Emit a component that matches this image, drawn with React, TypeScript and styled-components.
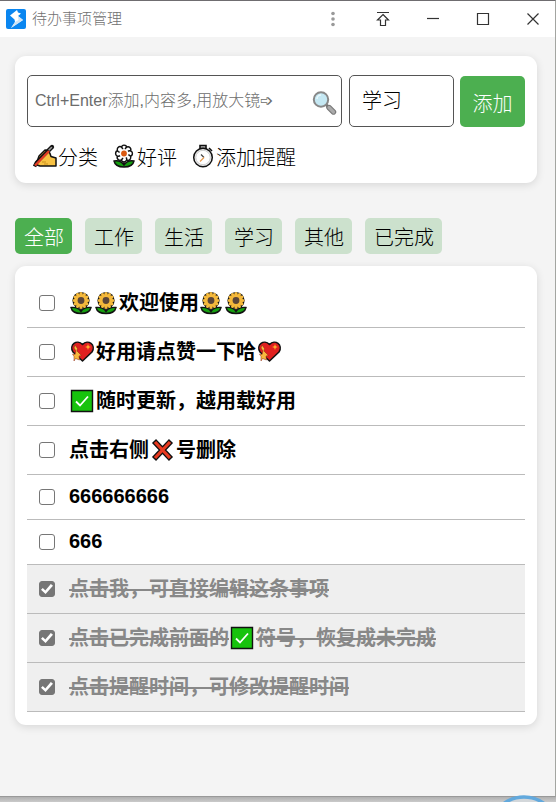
import React, { useState } from "react";
import styled, { createGlobalStyle } from "styled-components";

const GlobalStyle = createGlobalStyle`
  *, *::before, *::after { box-sizing: border-box; }
  body {
    margin: 0;
    background: #c8c8c8;
    color: #000;
    font-family: "Liberation Sans", "Noto Sans CJK SC", sans-serif;
    font-size: 20px;
    font-weight: 300;
  }
  button, input, select { font: inherit; color: inherit; margin: 0; }
`;

const Desktop = styled.div`
  display: flex;
  flex-direction: column;
  min-height: 100vh;
`;

const Window = styled.div`
  flex: 1;
  display: flex;
  flex-direction: column;
  background: #f4f4f4;
  border-top: 1px solid #6f6d70;
  border-right: 1px solid #a3a5a1;
  border-bottom: 1px solid #999;
`;

const TitleBar = styled.header`
  display: flex;
  align-items: center;
  height: 36px;
  padding: 0 7px 0 6px;
  background: #fff;
`;

const Title = styled.h1`
  flex: 1;
  margin: 0 0 0 6px;
  color: #707070;
  font-size: 15px;
  font-weight: 300;
  line-height: 20px;
`;

const WindowButtons = styled.div`
  display: flex;
  gap: 20px;
`;

const WindowButton = styled.button`
  display: flex;
  align-items: center;
  justify-content: center;
  width: 30px;
  height: 30px;
  padding: 0;
  border: 0;
  background: none;
`;

const Content = styled.main`
  padding: 19px 18px 71px 15px;
`;

const Card = styled.section`
  background: #fff;
  border-radius: 11px;
  box-shadow: 0 2px 8px rgba(0, 0, 0, 0.12);
`;

const Composer = styled(Card)`
  padding: 19px 12px 12px;
`;

const Form = styled.form`
  display: flex;
  align-items: flex-end;
`;

const Field = styled.div`
  flex: 1;
  display: flex;
  align-items: center;
  height: 52px;
  min-width: 0;
  padding: 0 4px 0 7px;
  border: 1px solid #555;
  border-radius: 5px;
`;

const TextInput = styled.input`
  flex: 1;
  min-width: 0;
  height: 48px;
  padding: 0;
  border: 0;
  outline: 0;
  background: none;
  font-size: 16px;
  &::placeholder { color: #6c6c6c; opacity: 1; }
`;

const PlainButton = styled.button`
  display: flex;
  align-items: center;
  padding: 0;
  border: 0;
  background: none;
`;

const SearchButton = styled(PlainButton)`
  padding-top: 4px;
`;

const Select = styled.select`
  appearance: none;
  width: 105px;
  height: 52px;
  margin: 0 6px 0 7px;
  padding: 0 12px;
  border: 1px solid #555;
  border-radius: 5px;
  background: #fff;
`;

const AddButton = styled.button`
  width: 65px;
  height: 51px;
  padding: 2px 0 0;
  border: 0;
  border-radius: 5px;
  background: #4caf50;
  color: #fff;
`;

const Actions = styled.div`
  display: flex;
  gap: 14px;
  margin-top: 14px;
  padding-left: 6px;
`;

const ActionButton = styled(PlainButton)`
  height: 30px;
  white-space: nowrap;
`;

const Tabs = styled.nav`
  display: flex;
  flex-wrap: wrap;
  gap: 13px;
  margin: 35px 0 12px;
`;

const Tab = styled.button<{ $active: boolean }>`
  height: 36px;
  padding: 1px 8px 0 9px;
  border: 0;
  border-radius: 5px;
  background: ${(p) => (p.$active ? "#4caf50" : "#cce1cd")};
  color: ${(p) => (p.$active ? "#fff" : "#000")};
`;

const ListCard = styled(Card)`
  padding: 13px 12px;
`;

const List = styled.ul`
  margin: 0;
  padding: 0;
  list-style: none;
`;

const Item = styled.li<{ $done: boolean; $short: boolean }>`
  display: flex;
  align-items: center;
  min-height: ${(p) => (p.$short ? 45 : 49)}px;
  padding: 0 12px;
  border-bottom: 1px solid #bbb;
  background: ${(p) => (p.$done ? "#efefef" : "transparent")};
`;

const Check = styled.input`
  appearance: none;
  flex: none;
  display: grid;
  place-content: center;
  width: 16px;
  height: 16px;
  border: 1px solid #767676;
  border-radius: 3px;
  background: #fff;
  &:checked { background: #767676; }
  &:checked::before {
    content: "";
    width: 12px;
    height: 10px;
    background: #fff;
    clip-path: polygon(0 58%, 15% 40%, 36% 64%, 82% 0, 100% 17%, 38% 100%);
  }
`;

const ItemText = styled.label<{ $done: boolean; $short: boolean }>`
  padding: ${(p) => (p.$short ? "0 0 2px 14px" : "0 0 0 14px")};
  font-weight: 700;
  line-height: 30px;
  color: ${(p) => (p.$done ? "#888" : "#000")};
  text-decoration: ${(p) => (p.$done ? "line-through 2px" : "none")};
`;

const Glyph = styled.svg<{ $wide?: boolean }>`
  display: inline-block;
  flex: none;
  width: ${(p) => (p.$wide ? 27 : 25)}px;
  height: 24px;
  vertical-align: -5px;
`;

const StatusStrip = styled.footer`
  height: 5px;
  display: flex;
  justify-content: flex-end;
  align-items: flex-end;
  padding-right: 10px;
  background: linear-gradient(#b0b0b0, #cacaca);
`;

const Dial = styled.svg`
  display: block;
  flex: none;
  width: 44px;
  height: 7px;
`;

function Sunflower() {
  const angles = [0, 30, 60, 90, 120, 150, 180, 210, 240, 270, 300, 330];
  return (
    <Glyph viewBox="0 0 25 24" role="img" aria-label="向日葵">
      <path d="M12 15v6M2 16.500c5-.5 8 1 10 4 2-3 5-4.500 10-4-1 4.500-5 6-10 6S3 21 2 16.500z" fill="#16a010" stroke="#111" strokeWidth="1.4" />
      <circle cx="12" cy="9.500" r="8.600" fill="#111" />
      {angles.map((a) => (
        <ellipse key={a} cx="12" cy="4.500" rx="1.800" ry="3.400" fill="#f5b93b" transform={`rotate(${a} 12 9.500)`} />
      ))}
      <circle cx="12" cy="9.500" r="5.500" fill="#f5b93b" />
      <circle cx="12" cy="9.500" r="3.400" fill="#5b4538" />
    </Glyph>
  );
}

function Blossom() {
  const angles = [0, 45, 90, 135, 180, 225, 270, 315];
  return (
    <Glyph viewBox="0 0 25 24" role="img" aria-label="花">
      <path d="M12 15v6M2 17c5-1 8 1 10 4 2-3 5-5 10-4-1 5-5 6-10 6S3 22 2 17z" fill="#16a010" stroke="#111" strokeWidth="1.4" />
      {angles.map((a) => (
        <circle key={a} cx="12" cy="3.8" r="2.7" fill="#fff" stroke="#111" strokeWidth="1.4" transform={`rotate(${a} 12 9.5)`} />
      ))}
      <circle cx="12" cy="9.5" r="4.600" fill="#fff" />
      <circle cx="12" cy="9.5" r="2.900" fill="#da5a12" />
    </Glyph>
  );
}

function WritingHand() {
  return (
    <Glyph viewBox="0 0 25 24" role="img" aria-label="书写">
      <path d="M14 8l5-5" stroke="#111" strokeWidth="4.200" strokeLinecap="round" />
      <path d="M14.500 7.500l4-4" stroke="#999" strokeWidth="1.600" strokeLinecap="round" />
      <path d="M4 18l2-6 6-6 3 .5 2 3 1 3 5 1.500v8H7l-3-1z" fill="#f8c243" stroke="#111" strokeWidth="1.500" strokeLinejoin="round" />
      <path d="M1.500 22.500l2-4L15 7" stroke="#111" strokeWidth="3.600" fill="none" />
      <path d="M2 21.500L16 7" stroke="#e23c24" strokeWidth="2.400" />
      <path d="M9 18h4M11 20h4" stroke="#c8901f" />
    </Glyph>
  );
}

function Stopwatch() {
  return (
    <Glyph viewBox="0 0 25 24" role="img" aria-label="秒表">
      <path d="M9 1.5h6v3H9zM18 4l3 3" fill="#bbb" stroke="#111" strokeWidth="1.6" />
      <circle cx="12" cy="13.5" r="9.3" fill="#ececec" stroke="#111" strokeWidth="1.5" />
      <circle cx="12" cy="13.5" r="7.200" fill="#fff" stroke="#cfcfcf" strokeWidth="1" />
      <path d="M10 10.5l3 3" stroke="#444" strokeWidth="1.3" />
      <path d="M13 13.5l-4 4" stroke="#e89a4f" strokeWidth="1.2" />
    </Glyph>
  );
}

function Magnifier() {
  return (
    <Glyph viewBox="0 0 25 24" aria-hidden="true">
      <path d="M14 13.500l3 3" stroke="#777" strokeWidth="3" />
      <path d="M17 16.500l4.500 4.500" stroke="#777" strokeWidth="5.400" strokeLinecap="round" />
      <path d="M17 16.500l4.500 4.500" stroke="#aaa" strokeWidth="3.200" strokeLinecap="round" />
      <circle cx="9" cy="8.500" r="7.200" fill="#c5e8f3" stroke="#888" strokeWidth="2" />
      <path d="M5 8a4 4 0 0 1 4-4" stroke="#e8f8fc" strokeWidth="1.500" fill="none" />
    </Glyph>
  );
}

function Heart() {
  return (
    <Glyph $wide viewBox="0 0 27 24" role="img" aria-label="爱心">
      <path d="M13.500 21L4 12C-.5 5 8-1.500 13.500 4.500 19-1.500 27.500 5 23 12z" fill="#e0201f" stroke="#111" strokeWidth="1.500" strokeLinejoin="round" />
      <path d="M6 5l2.500 3.500L8 11l4.500 4.500-2.500.5.500 4-4-1.500L5 21v-4.500L3.500 14 6 14.500 7 11 5 8z" fill="#f7b93e" stroke="#8b2110" strokeWidth=".5" />
      <path d="M19 4l.8 2.200L22 7l-2.200.8L19 10l-.8-2.200L16 7l2.200-.8z" fill="#ffb52e" />
    </Glyph>
  );
}

function GreenCheck() {
  return (
    <Glyph $wide viewBox="0 0 27 24" role="img" aria-label="对勾">
      <path d="M2.500 1.500h21v21h-21z" fill="#17c30d" stroke="#111" strokeWidth="1.4" />
      <path d="M7 12.500l4 4 8-9" fill="none" stroke="#fff" strokeWidth="1.8" />
    </Glyph>
  );
}

function RedCross() {
  return (
    <Glyph $wide viewBox="0 0 27 24" role="img" aria-label="叉">
      <path d="M5 3l17 18M22 3L5 21" stroke="#111" strokeWidth="5.600" />
      <path d="M6 4l15 16M21 4L6 20" stroke="#e93a20" strokeWidth="3.200" />
    </Glyph>
  );
}

function AppLogo() {
  return (
    <svg width="20" height="20" viewBox="0 0 20 20" aria-hidden="true">
      <rect width="20" height="20" rx="2" fill="#0a86f0" />
      <path d="M11 1L4 6.500l4.500 4L9 13l-4 6L17 11l-5-4 3-2.500-3-1z" fill="#fff" />
      <path d="M12 7l5 4L5 19l4-6 3.500-2z" fill="#cfe4f5" />
    </svg>
  );
}

const windowControls = [
  { label: "更多", art: <g fill="#999"><circle cx="9" cy="3.500" r="1.800" /><circle cx="9" cy="9" r="1.800" /><circle cx="9" cy="14.500" r="1.800" /></g> },
  { label: "置顶", art: <path d="M3 2.500h12M9 4.500l5.500 5.500h-3v5.500h-5V10h-3z" /> },
  { label: "最小化", art: <path d="M3 8.500h12" /> },
  { label: "最大化", art: <path d="M3.500 3.500h11v11h-11z" /> },
  { label: "关闭", art: <path d="M3.500 3.500l11 11M14.500 3.500l-11 11" /> },
];

const categories = ["全部", "工作", "生活", "学习", "其他", "已完成"];

const initialItems: { text: React.ReactNode; done: boolean; short?: boolean }[] = [
  { text: <><Sunflower /><Sunflower />欢迎使用<Sunflower /><Sunflower /></>, done: false },
  { text: <><Heart />好用请点赞一下哈<Heart /></>, done: false },
  { text: <><GreenCheck />随时更新，越用载好用</>, done: false },
  { text: <>点击右侧<RedCross />号删除</>, done: false },
  { text: "666666666", done: false, short: true },
  { text: "666", done: false, short: true },
  { text: "点击我，可直接编辑这条事项", done: true },
  { text: <>点击已完成前面的<GreenCheck />符号，恢复成未完成</>, done: true },
  { text: "点击提醒时间，可修改提醒时间", done: true },
];

export default function App() {
  const [active, setActive] = useState("全部");
  const [items, setItems] = useState(initialItems);
  const toggle = (index: number) =>
    setItems(items.map((item, i) => (i === index ? { ...item, done: !item.done } : item)));

  return (
    <Desktop>
      <GlobalStyle />
      <Window>
        <TitleBar>
          <AppLogo />
          <Title>待办事项管理</Title>
          <WindowButtons>
            {windowControls.map((c) => (
              <WindowButton key={c.label} type="button" aria-label={c.label}>
                <svg width="18" height="18" viewBox="0 0 18 18" fill="none" stroke={c.label === "更多" ? "none" : "#333"} strokeWidth="1.2">
                  {c.art}
                </svg>
              </WindowButton>
            ))}
          </WindowButtons>
        </TitleBar>
        <Content>
          <Composer>
            <Form onSubmit={(e) => e.preventDefault()}>
              <Field>
                <TextInput aria-label="待办内容" placeholder="Ctrl+Enter添加,内容多,用放大镜➩" />
                <SearchButton type="button" aria-label="放大镜">
                  <Magnifier />
                </SearchButton>
              </Field>
              <Select aria-label="分类" defaultValue="学习">
                {categories.slice(1, 5).map((c) => (
                  <option key={c}>{c}</option>
                ))}
              </Select>
              <AddButton type="submit">添加</AddButton>
            </Form>
            <Actions>
              <ActionButton type="button"><WritingHand />分类</ActionButton>
              <ActionButton type="button"><Blossom />好评</ActionButton>
              <ActionButton type="button"><Stopwatch />添加提醒</ActionButton>
            </Actions>
          </Composer>
          <Tabs>
            {categories.map((c) => (
              <Tab key={c} type="button" $active={c === active} onClick={() => setActive(c)}>
                {c}
              </Tab>
            ))}
          </Tabs>
          <ListCard>
            <List>
              {items.map((item, i) => (
                <Item key={i} $done={item.done} $short={!!item.short}>
                  <Check type="checkbox" id={`todo-${i}`} checked={item.done} onChange={() => toggle(i)} />
                  <ItemText htmlFor={`todo-${i}`} $done={item.done} $short={!!item.short}>
                    {item.text}
                  </ItemText>
                </Item>
              ))}
            </List>
          </ListCard>
        </Content>
      </Window>
      <StatusStrip>
        <Dial viewBox="-22 -36 44 7" aria-hidden="true">
          <circle r="34" fill="#d3d7da" stroke="#62a9dd" strokeWidth="3.500" />
        </Dial>
      </StatusStrip>
    </Desktop>
  );
}
